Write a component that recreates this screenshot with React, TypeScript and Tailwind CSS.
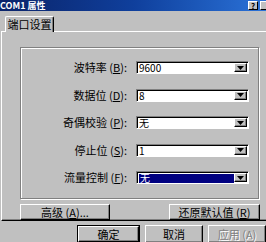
const raised =
  "border border-t-white border-l-white border-r-black border-b-black shadow-[inset_-1px_-1px_0_0_#808080]";

const rows = [
  { label: "波特率", key: "B", value: "9600" },
  { label: "数据位", key: "D", value: "8" },
  { label: "奇偶校验", key: "P", value: "无" },
  { label: "停止位", key: "S", value: "1" },
  { label: "流量控制", key: "F", value: "无", selected: true },
];

function Arrow() {
  return (
    <svg width="7" height="4" viewBox="0 0 7 4">
      <path d="M0 0h7L3.5 4z" fill="#000" />
    </svg>
  );
}

function Combo({ value, selected }: { value: string; selected?: boolean }) {
  return (
    <div className="flex h-[13px] w-[113px] items-stretch border border-t-[#808080] border-l-[#808080] border-r-white border-b-white bg-white shadow-[inset_1px_1px_0_0_#000]">
      <div className="flex flex-1 items-center pl-[2px] pt-px">
        <span
          className={
            selected
              ? "flex h-[9px] flex-1 items-center bg-[#000080] pl-px text-[10px] leading-none text-white"
              : "text-[10px] leading-none text-black"
          }
        >
          {value}
        </span>
      </div>
      <div
        className={`my-px mr-px flex w-[13px] items-center justify-center bg-[#c0c0c0] ${raised}`}
      >
        <Arrow />
      </div>
    </div>
  );
}

function Btn({
  children,
  className = "",
  disabled,
}: {
  children: React.ReactNode;
  className?: string;
  disabled?: boolean;
}) {
  return (
    <div
      className={`flex items-center justify-center bg-[#c0c0c0] text-[11px] leading-none ${raised} ${
        disabled ? "text-[#808080] [text-shadow:1px_1px_0_#fff]" : "text-black"
      } ${className}`}
    >
      {children}
    </div>
  );
}

export default function App() {
  return (
    <div
      className="flex h-[242px] w-[266px] flex-col overflow-hidden bg-[#c0c0c0]"
      style={{ fontFamily: '"Noto Sans CJK SC", "Liberation Sans", sans-serif' }}
    >
      <div className="flex h-[11px] items-center bg-gradient-to-r from-[#0a246a] via-[#0f3f9c] to-[#2b72d8]">
        <span className="text-[9px] font-bold leading-[11px] text-white">
          COM1 属性
        </span>
        <div className="ml-auto flex gap-[2px]">
          <div className="flex h-[9px] w-[10px] items-center justify-center border border-t-white border-l-white border-r-black border-b-black bg-[#c0c0c0] text-[8px] font-bold leading-none text-black">
            ?
          </div>
          <div className="h-[9px] w-[6px] border border-t-white border-l-white border-r-0 border-b-black bg-[#c0c0c0]" />
        </div>
      </div>

      <div className="flex pl-[5px] pt-[5px]">
        <div className="relative z-10 -mb-px flex h-[16px] w-[49px] items-center justify-center rounded-t-[2px] border border-b-0 border-t-white border-l-white border-r-black bg-[#c0c0c0] text-[11px] leading-none text-black shadow-[inset_-1px_0_0_0_#808080]">
          端口设置
        </div>
      </div>

      <div className="ml-px flex h-[193px] flex-col border border-r-0 border-t-white border-l-white border-b-black pl-[18px] pt-[15px] shadow-[inset_0_-1px_0_0_#808080]">
        <div className="flex h-[152px] w-[239px] flex-col gap-[14.5px] border border-[#808080] pt-[13px] shadow-[inset_1px_1px_0_0_#fff,1px_1px_0_0_#fff]">
          {rows.map((r) => (
            <div key={r.key} className="flex h-[13px] items-center">
              <div className="w-[106px] text-right text-[11px] leading-none text-black">
                {r.label} (<span className="underline">{r.key}</span>):
              </div>
              <div className="ml-[9px]">
                <Combo value={r.value} selected={r.selected} />
              </div>
            </div>
          ))}
        </div>
        <div className="mt-[5px] flex w-[240px] justify-between">
          <Btn className="h-[16px] w-[90px]">
            高级 (<span className="underline">A</span>)...
          </Btn>
          <Btn className="h-[16px] w-[91px]">
            还原默认值 (<span className="underline">R</span>)
          </Btn>
        </div>
      </div>

      <div className="ml-[77px] mt-[4px] flex gap-[5px]">
        <div className="border border-black">
          <Btn className="h-[16px] w-[61px]">确定</Btn>
        </div>
        <Btn className="h-[18px] w-[60px]">取消</Btn>
        <Btn className="h-[18px] w-[60px]" disabled>
          应用 (A)
        </Btn>
      </div>
    </div>
  );
}
